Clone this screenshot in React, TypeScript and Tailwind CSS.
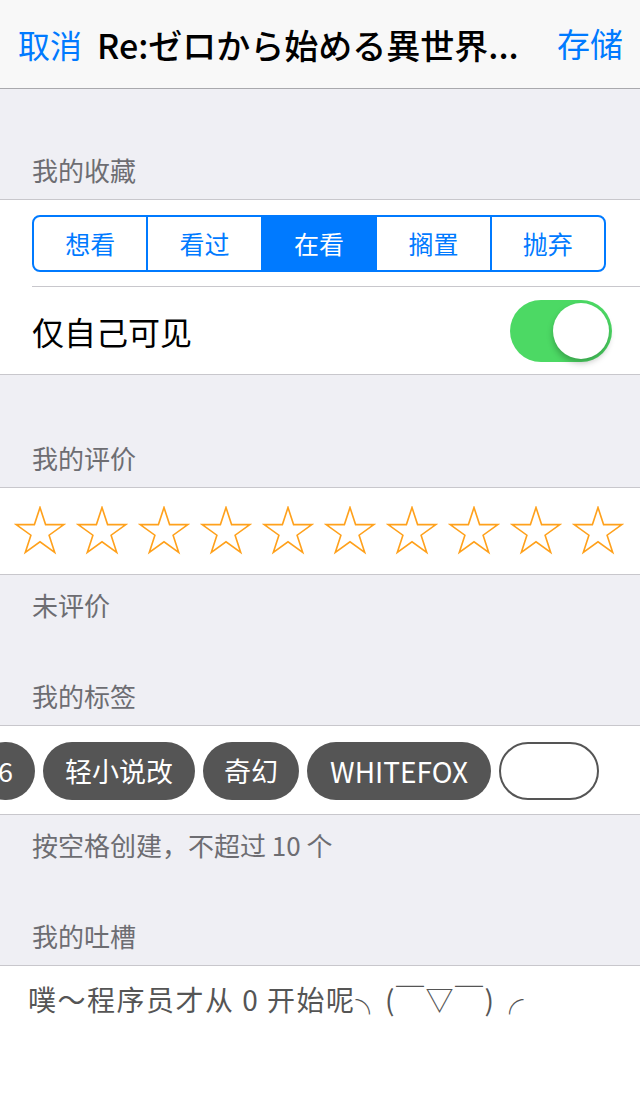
const font = { fontFamily: '"Noto Sans CJK SC", "Noto Sans", sans-serif' };

const SEGMENTS = ['想看', '看过', '在看', '搁置', '抛弃'];
const TAGS = ['轻小说改', '奇幻', 'WHITEFOX'];

function Star() {
  return (
    <svg width="52" height="50" viewBox="0 0 52 50" className="shrink-0">
      <path
        d="M26 1.5 L31.6 18.6 L49.8 18.6 L35.1 29.2 L40.7 46.5 L26 35.8 L11.3 46.5 L16.9 29.2 L2.2 18.6 L20.4 18.6 Z"
        fill="none"
        stroke="#ffa11c"
        strokeWidth="1.6"
        strokeLinejoin="miter"
      />
    </svg>
  );
}

function SectionHeader({ title, top }: { title: string; top: string }) {
  return (
    <div className={`${top} pb-[11px] px-8 text-[26px] leading-[36px] text-[#6d6d72]`}>{title}</div>
  );
}

function Toggle() {
  return (
    <div className="w-[102px] h-[62px] rounded-full bg-[#4cd964] flex items-center justify-end pr-[3px]">
      <div className="w-[56px] h-[56px] rounded-full bg-white shadow-[0_4px_6px_rgba(0,0,0,0.25)]" />
    </div>
  );
}

export default function App() {
  const active = 2;
  return (
    <div className="w-[640px] h-[1096px] bg-[#efeff4] overflow-hidden" style={font}>
      {/* nav */}
      <div className="h-[89px] bg-[#f8f8f8] border-b border-[#a9a9ad] flex items-center pl-[18px] pr-[17px]">
        <span className="text-[32px] text-[#007aff]">取消</span>
        <span
          className="ml-[15px] flex-1 text-[34px] font-medium text-black whitespace-nowrap"
          style={{ fontFamily: '"Noto Sans CJK JP", "Noto Sans", sans-serif' }}
        >
          Re:ゼロから始める異世界...
        </span>
        <span className="text-[33px] text-[#007aff]">存储</span>
      </div>

      <SectionHeader title="我的收藏" top="pt-[63px]" />
      <div className="bg-white border-y border-[#c8c7cc]">
        <div className="ml-8 pt-[15px] pb-[14px] pr-[34px] border-b border-[#c8c7cc]">
          <div className="flex h-[57px] border-2 border-[#007aff] rounded-[8px] overflow-hidden">
            {SEGMENTS.map((s, i) => (
              <div
                key={s}
                className={`flex-1 flex items-center justify-center text-[25px] ${i > 0 ? 'border-l-2 border-[#007aff]' : ''} ${i === active ? 'bg-[#007aff] text-white' : 'text-[#007aff]'}`}
              >
                {s}
              </div>
            ))}
          </div>
        </div>
        <div className="h-[87px] flex items-center justify-between pl-8 pr-[28px]">
          <span className="text-[32px] text-black">仅自己可见</span>
          <Toggle />
        </div>
      </div>

      <SectionHeader title="我的评价" top="pt-[65px]" />
      <div className="bg-white border-y border-[#c8c7cc] h-[88px] flex items-center pl-[14px] gap-[10px]">
        {Array.from({ length: 10 }).map((_, i) => (
          <Star key={i} />
        ))}
      </div>
      <div className="pt-[12px] px-8 text-[26px] leading-[36px] text-[#6d6d72]">未评价</div>

      <SectionHeader title="我的标签" top="pt-[55px]" />
      <div className="bg-white border-y border-[#c8c7cc] h-[90px] pt-[2px] flex items-center gap-2 overflow-hidden">
        <div className="-ml-[24px] h-[58px] px-[22px] rounded-full bg-[#555555] text-white text-[27px] flex items-center shrink-0">6</div>
        <div className="h-[58px] w-[152px] justify-center rounded-full bg-[#555555] text-white text-[27px] flex items-center shrink-0">
          {TAGS[0]}
        </div>
        <div className="h-[58px] w-[96px] justify-center rounded-full bg-[#555555] text-white text-[27px] flex items-center shrink-0">
          {TAGS[1]}
        </div>
        <div className="h-[58px] w-[184px] justify-center rounded-full bg-[#555555] text-white text-[28px] flex items-center shrink-0">
          {TAGS[2]}
        </div>
        <div className="h-[58px] w-[100px] rounded-full border-2 border-[#555555] shrink-0" />
      </div>
      <div className="pt-[12px] px-8 text-[26px] leading-[36px] text-[#6d6d72]">按空格创建，不超过 10 个</div>

      <SectionHeader title="我的吐槽" top="pt-[55px]" />
      <div className="bg-white border-t border-[#c8c7cc] h-[200px] pl-[28px] pt-[12px]">
        <span className="text-[28px] leading-[42px] text-[#555555] tracking-[1.5px]">噗～程序员才从 0 开始呢╮(￣▽￣)╭</span>
      </div>
    </div>
  );
}
